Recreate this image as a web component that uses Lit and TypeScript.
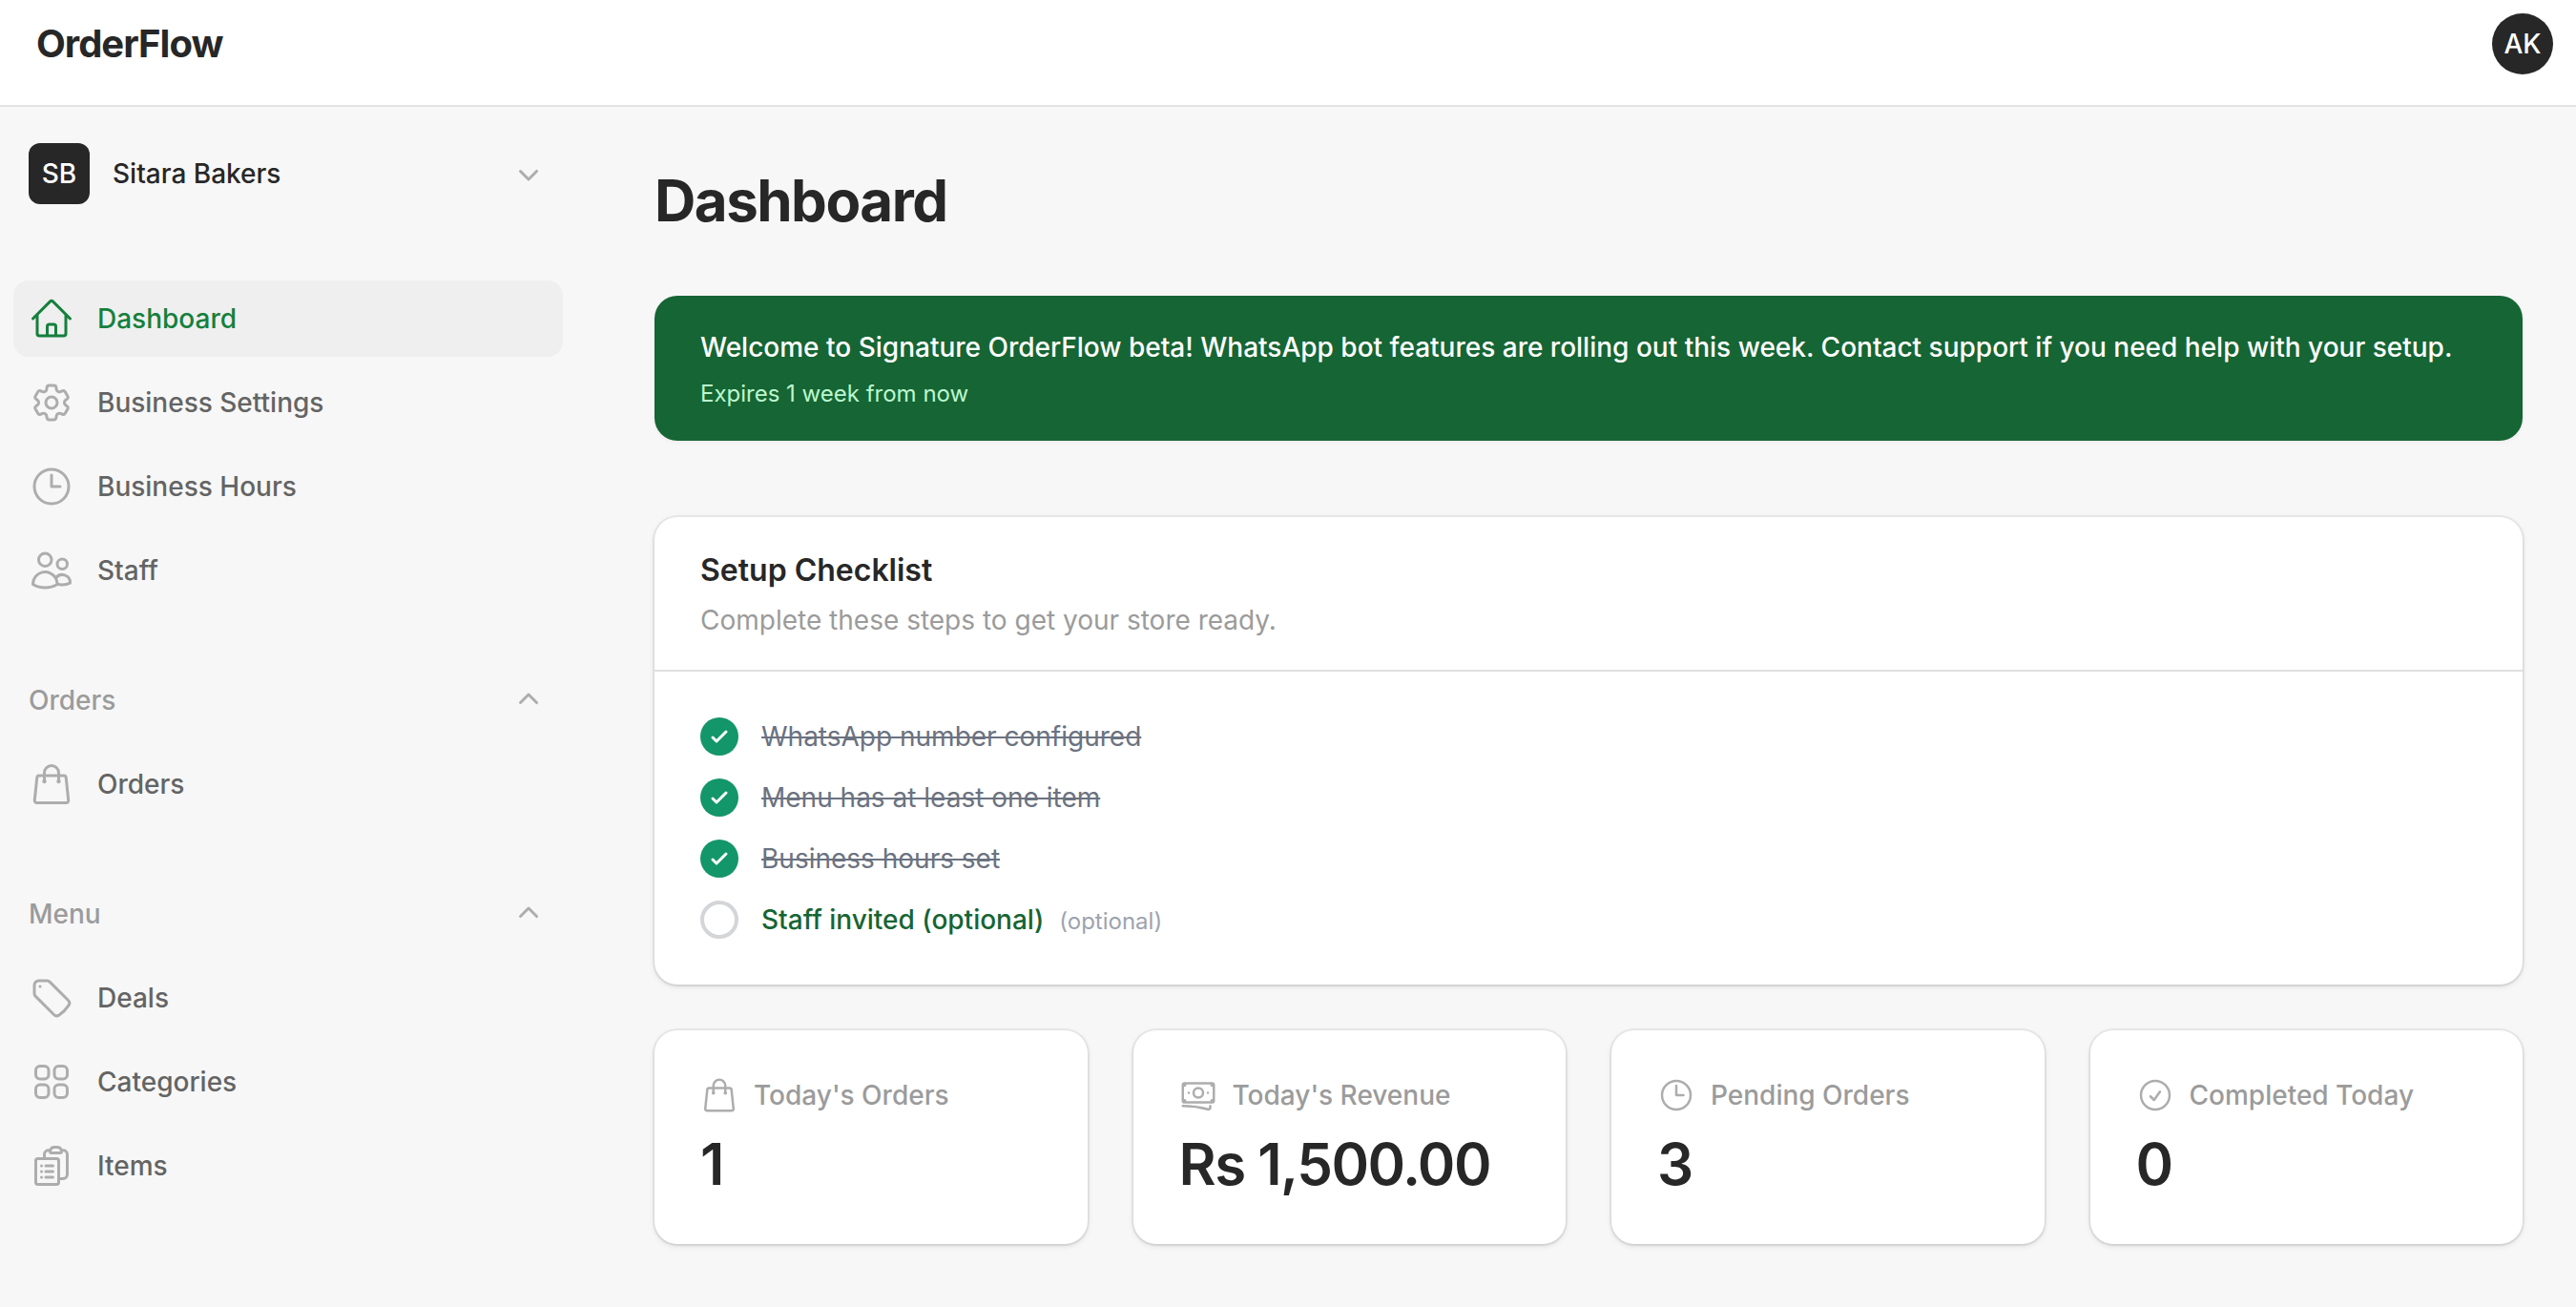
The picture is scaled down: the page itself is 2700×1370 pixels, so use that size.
import { LitElement, html, css } from "lit";
import { customElement, property } from "lit/decorators.js";
import { classMap } from "lit/directives/class-map.js";

// Outline icons on a 24x24 grid
const ICONS: Record<string, string> = {
  home: "m2.25 12 8.954-8.955c.44-.439 1.152-.439 1.591 0L21.75 12M4.5 9.75v10.125c0 .621.504 1.125 1.125 1.125H9.75v-4.875c0-.621.504-1.125 1.125-1.125h2.25c.621 0 1.125.504 1.125 1.125V21h4.125c.621 0 1.125-.504 1.125-1.125V9.75M8.25 21h8.25",
  cog: "M9.594 3.94c.09-.542.56-.94 1.11-.94h2.593c.55 0 1.02.398 1.11.94l.213 1.281c.063.374.313.686.645.87.074.04.147.083.22.127.325.196.72.257 1.075.124l1.217-.456a1.125 1.125 0 0 1 1.37.49l1.296 2.247a1.125 1.125 0 0 1-.26 1.431l-1.003.827c-.293.241-.438.613-.43.992a7.723 7.723 0 0 1 0 .255c-.008.378.137.75.43.991l1.004.827c.424.35.534.955.26 1.43l-1.298 2.247a1.125 1.125 0 0 1-1.369.491l-1.217-.456c-.355-.133-.75-.072-1.076.124a6.47 6.47 0 0 1-.22.128c-.331.183-.581.495-.644.869l-.213 1.281c-.09.543-.56.94-1.11.94h-2.594c-.55 0-1.019-.398-1.11-.94l-.213-1.281c-.062-.374-.312-.686-.644-.87a6.52 6.52 0 0 1-.22-.127c-.325-.196-.72-.257-1.076-.124l-1.217.456a1.125 1.125 0 0 1-1.369-.49l-1.297-2.247a1.125 1.125 0 0 1 .26-1.431l1.004-.827c.292-.24.437-.613.43-.991a6.932 6.932 0 0 1 0-.255c.007-.38-.138-.751-.43-.992l-1.004-.827a1.125 1.125 0 0 1-.26-1.43l1.297-2.247a1.125 1.125 0 0 1 1.37-.491l1.216.456c.356.133.751.072 1.076-.124.072-.044.146-.086.22-.128.332-.183.582-.495.644-.869l.214-1.28ZM15 12a3 3 0 1 1-6 0 3 3 0 0 1 6 0Z",
  clock: "M12 6v6h4.5m4.5 0a9 9 0 1 1-18 0 9 9 0 0 1 18 0Z",
  users: "M15 19.128a9.38 9.38 0 0 0 2.625.372 9.337 9.337 0 0 0 4.121-.952 4.125 4.125 0 0 0-7.533-2.493M15 19.128v-.003c0-1.113-.285-2.16-.786-3.07M15 19.128v.106A12.318 12.318 0 0 1 8.624 21c-2.331 0-4.512-.645-6.374-1.766l-.001-.109a6.375 6.375 0 0 1 11.964-3.07M12 6.375a3.375 3.375 0 1 1-6.75 0 3.375 3.375 0 0 1 6.75 0Zm8.25 2.25a2.625 2.625 0 1 1-5.25 0 2.625 2.625 0 0 1 5.25 0Z",
  bag: "M15.75 10.5V6a3.75 3.75 0 1 0-7.5 0v4.5m11.356-1.993 1.263 12c.07.665-.45 1.243-1.119 1.243H4.25a1.125 1.125 0 0 1-1.12-1.243l1.264-12A1.125 1.125 0 0 1 5.513 7.5h12.974c.576 0 1.059.435 1.119 1.007ZM8.625 10.5a.375.375 0 1 1-.75 0 .375.375 0 0 1 .75 0Zm7.5 0a.375.375 0 1 1-.75 0 .375.375 0 0 1 .75 0Z",
  tag: "M9.568 3H5.25A2.25 2.25 0 0 0 3 5.25v4.318c0 .597.237 1.17.659 1.591l9.581 9.581c.699.699 1.78.872 2.607.33a18.095 18.095 0 0 0 5.223-5.223c.542-.827.369-1.908-.33-2.607L11.16 3.66A2.25 2.25 0 0 0 9.568 3ZM6 6h.008v.008H6V6Z",
  squares: "M3.75 6A2.25 2.25 0 0 1 6 3.75h2.25A2.25 2.25 0 0 1 10.5 6v2.25a2.25 2.25 0 0 1-2.25 2.25H6a2.25 2.25 0 0 1-2.25-2.25V6ZM3.75 15.75A2.25 2.25 0 0 1 6 13.5h2.25a2.25 2.25 0 0 1 2.25 2.25V18a2.25 2.25 0 0 1-2.25 2.25H6A2.25 2.25 0 0 1 3.75 18v-2.25ZM13.5 6a2.25 2.25 0 0 1 2.25-2.25H18A2.25 2.25 0 0 1 20.25 6v2.25A2.25 2.25 0 0 1 18 10.5h-2.25a2.25 2.25 0 0 1-2.25-2.25V6ZM13.5 15.75a2.25 2.25 0 0 1 2.25-2.25H18a2.25 2.25 0 0 1 2.25 2.25V18A2.25 2.25 0 0 1 18 20.25h-2.25A2.25 2.25 0 0 1 13.5 18v-2.25Z",
  clipboard: "M9 12h3.75M9 15h3.75M9 18h3.75m3 .75H18a2.25 2.25 0 0 0 2.25-2.25V6.108c0-1.135-.845-2.098-1.976-2.192a48.424 48.424 0 0 0-1.123-.08m-5.801 0c-.065.21-.1.433-.1.664 0 .414.336.75.75.75h4.5a.75.75 0 0 0 .75-.75 2.25 2.25 0 0 0-.1-.664m-5.8 0A2.251 2.251 0 0 1 13.5 2.25H15c1.012 0 1.867.668 2.15 1.586m-5.8 0c-.376.023-.75.05-1.124.08C9.095 4.01 8.25 4.973 8.25 6.108V8.25m0 0H4.875c-.621 0-1.125.504-1.125 1.125v11.25c0 .621.504 1.125 1.125 1.125h9.75c.621 0 1.125-.504 1.125-1.125V9.375c0-.621-.504-1.125-1.125-1.125H8.25ZM6.75 12h.008v.008H6.75V12Zm0 3h.008v.008H6.75V15Zm0 3h.008v.008H6.75V18Z",
  banknotes: "M2.25 18.75a60.07 60.07 0 0 1 15.797 2.101c.727.198 1.453-.342 1.453-1.096V18.75M3.75 4.5v.75A.75.75 0 0 1 3 6h-.75m0 0v-.375c0-.621.504-1.125 1.125-1.125H20.25M2.25 6v9m18-10.5v.75c0 .414.336.75.75.75h.75m-1.5-1.5h.375c.621 0 1.125.504 1.125 1.125v9.75c0 .621-.504 1.125-1.125 1.125h-.375m1.5-1.5H21a.75.75 0 0 0-.75.75v.75m0 0H3.75m0 0h-.375a1.125 1.125 0 0 1-1.125-1.125V15m1.5 1.5v-.75A.75.75 0 0 0 3 15h-.75M15 10.5a3 3 0 1 1-6 0 3 3 0 0 1 6 0Zm3 0h.008v.008H18V10.5Zm-12 0h.008v.008H6V10.5Z",
  "check-circle": "M9 12.75 11.25 15 15 9.75M21 12a9 9 0 1 1-18 0 9 9 0 0 1 18 0Z",
  check: "M5 13l4 4L19 7",
};

// Solid icons on a 20x20 grid
const MINI_ICONS: Record<string, string> = {
  "chevron-down": "M5.22 8.22a.75.75 0 0 1 1.06 0L10 11.94l3.72-3.72a.75.75 0 1 1 1.06 1.06l-4.25 4.25a.75.75 0 0 1-1.06 0L5.22 9.28a.75.75 0 0 1 0-1.06Z",
  "chevron-up": "M9.47 6.47a.75.75 0 0 1 1.06 0l4.25 4.25a.75.75 0 1 1-1.06 1.06L10 8.06l-3.72 3.72a.75.75 0 0 1-1.06-1.06l4.25-4.25Z",
};

const NAV = [
  {
    label: "",
    items: [
      { icon: "home", label: "Dashboard", active: true },
      { icon: "cog", label: "Business Settings" },
      { icon: "clock", label: "Business Hours" },
      { icon: "users", label: "Staff" },
    ],
  },
  { label: "Orders", items: [{ icon: "bag", label: "Orders" }] },
  {
    label: "Menu",
    items: [
      { icon: "tag", label: "Deals" },
      { icon: "squares", label: "Categories" },
      { icon: "clipboard", label: "Items" },
    ],
  },
];

const STEPS = [
  { label: "WhatsApp number configured", done: true },
  { label: "Menu has at least one item", done: true },
  { label: "Business hours set", done: true },
  { label: "Staff invited (optional)", done: false, optional: true },
];

const STATS = [
  { icon: "bag", label: "Today's Orders", value: "1" },
  { icon: "banknotes", label: "Today's Revenue", value: "Rs 1,500.00" },
  { icon: "clock", label: "Pending Orders", value: "3" },
  { icon: "check-circle", label: "Completed Today", value: "0" },
];

@customElement("app-icon")
export class AppIcon extends LitElement {
  @property() name = "";

  static styles = css`
    :host {
      display: block;
      flex-shrink: 0;
      width: 40px;
      height: 40px;
    }

    svg {
      display: block;
      width: 100%;
      height: 100%;
    }
  `;

  render() {
    if (MINI_ICONS[this.name]) {
      return html`<svg viewBox="0 0 20 20" fill="currentColor">
        <path fill-rule="evenodd" clip-rule="evenodd" d=${MINI_ICONS[this.name]} />
      </svg>`;
    }
    return html`<svg viewBox="0 0 24 24" fill="none" stroke="currentColor" stroke-width=${this.name === "check" ? 3 : 1.5}>
      <path stroke-linecap="round" stroke-linejoin="round" d=${ICONS[this.name]} />
    </svg>`;
  }
}

@customElement("app-sidebar")
export class AppSidebar extends LitElement {
  static styles = css`
    :host {
      display: flex;
      flex-direction: column;
      box-sizing: border-box;
      width: 604px;
      flex-shrink: 0;
      padding: 38px 14px 0;
      font-weight: 500;
      line-height: 40px;
    }

    .tenant {
      display: flex;
      align-items: center;
      gap: 24px;
      padding: 0 16px;
      margin-bottom: 80px;
      color: #272727;
    }

    .tenant-avatar {
      display: flex;
      align-items: center;
      justify-content: center;
      width: 64px;
      height: 64px;
      border-radius: 12px;
      background: #272727;
      color: #fff;
    }

    .tenant-name {
      flex: 1;
    }

    .chevron {
      color: #adadad;
    }

    nav {
      display: flex;
      flex-direction: column;
      gap: 56px;
    }

    .group {
      display: flex;
      flex-direction: column;
      gap: 8px;
    }

    .group-header {
      display: flex;
      align-items: center;
      justify-content: space-between;
      height: 80px;
      padding: 0 16px;
      color: #9b9b9b;
    }

    .item {
      display: flex;
      align-items: center;
      gap: 24px;
      height: 80px;
      box-sizing: border-box;
      padding: 0 16px;
      border-radius: 16px;
      color: #646464;
    }

    .item app-icon {
      width: 48px;
      height: 48px;
      color: #adadad;
    }

    .item.active {
      background: #efefef;
    }

    .item.active,
    .item.active app-icon {
      color: #15803d;
    }
  `;

  render() {
    return html`
      <div class="tenant">
        <div class="tenant-avatar">SB</div>
        <span class="tenant-name">Sitara Bakers</span>
        <app-icon class="chevron" name="chevron-down"></app-icon>
      </div>
      <nav>
        ${NAV.map(
          (group) => html`
            <div class="group">
              ${group.label
                ? html`<div class="group-header">
                    <span>${group.label}</span>
                    <app-icon class="chevron" name="chevron-up"></app-icon>
                  </div>`
                : ""}
              ${group.items.map(
                (item: any) => html`
                  <div class=${classMap({ item: true, active: !!item.active })}>
                    <app-icon name=${item.icon}></app-icon>
                    <span>${item.label}</span>
                  </div>
                `
              )}
            </div>
          `
        )}
      </nav>
    `;
  }
}

@customElement("setup-checklist")
export class SetupChecklist extends LitElement {
  static styles = css`
    :host {
      display: block;
      border-radius: 24px;
      background: #fff;
      box-shadow: 0 0 0 2px rgba(0, 0, 0, 0.05), 0 2px 6px rgba(0, 0, 0, 0.1), 0 2px 4px -2px rgba(0, 0, 0, 0.1);
    }

    header {
      display: flex;
      flex-direction: column;
      gap: 8px;
      padding: 32px 48px;
      border-bottom: 2px solid #dfdfdf;
    }

    h3 {
      margin: 0;
      font-size: 32px;
      font-weight: 600;
      line-height: 48px;
      color: #272727;
    }

    .description {
      margin: 0;
      line-height: 40px;
      color: #9b9b9b;
    }

    ul {
      display: flex;
      flex-direction: column;
      gap: 24px;
      margin: 0;
      padding: 48px;
      list-style: none;
    }

    li {
      display: flex;
      align-items: center;
      gap: 24px;
      height: 40px;
      line-height: 40px;
    }

    .mark {
      display: flex;
      align-items: center;
      justify-content: center;
      box-sizing: border-box;
      width: 40px;
      height: 40px;
      border: 4px solid #d3d5d8;
      border-radius: 50%;
      color: #fff;
    }

    .done .mark {
      border: 0;
      background: #139669;
    }

    .mark app-icon {
      width: 24px;
      height: 24px;
    }

    .done .label {
      color: #6b7280;
      text-decoration: line-through;
    }

    .pending .label {
      font-weight: 500;
      color: #166534;
    }

    .hint {
      margin-left: 8px;
      font-size: 24px;
      line-height: 1;
      color: #9ca3af;
    }
  `;

  render() {
    return html`
      <header>
        <h3>Setup Checklist</h3>
        <p class="description">Complete these steps to get your store ready.</p>
      </header>
      <ul>
        ${STEPS.map(
          (step) => html`
            <li class=${step.done ? "done" : "pending"}>
              <span class="mark">${step.done ? html`<app-icon name="check"></app-icon>` : ""}</span>
              <div>
                <span class="label">${step.label}</span>
                ${step.optional ? html`<span class="hint">(optional)</span>` : ""}
              </div>
            </li>
          `
        )}
      </ul>
    `;
  }
}

@customElement("stat-card")
export class StatCard extends LitElement {
  @property() icon = "";
  @property() label = "";
  @property() value = "";

  static styles = css`
    :host {
      display: flex;
      flex-direction: column;
      gap: 16px;
      padding: 48px;
      border-radius: 24px;
      background: #fff;
      box-shadow: 0 0 0 2px rgba(0, 0, 0, 0.05), 0 2px 6px rgba(0, 0, 0, 0.1), 0 2px 4px -2px rgba(0, 0, 0, 0.1);
    }

    .label {
      display: flex;
      align-items: center;
      gap: 16px;
      font-weight: 500;
      line-height: 40px;
      color: #9b9b9b;
    }

    .label app-icon {
      color: #adadad;
    }

    .value {
      font-size: 60px;
      font-weight: 600;
      line-height: 72px;
      letter-spacing: -0.025em;
      white-space: nowrap;
      color: #272727;
    }
  `;

  render() {
    return html`
      <div class="label">
        <app-icon name=${this.icon}></app-icon>
        <span>${this.label}</span>
      </div>
      <div class="value">${this.value}</div>
    `;
  }
}

@customElement("app-root")
export class AppRoot extends LitElement {
  static styles = css`
    :host {
      display: flex;
      flex-direction: column;
      height: 1370px;
      overflow: hidden;
      background: #f7f7f7;
      font-family: Inter, sans-serif;
      font-size: 28px;
      color: #272727;
    }

    .topbar {
      display: flex;
      align-items: center;
      justify-content: space-between;
      box-sizing: border-box;
      height: 112px;
      padding: 0 24px 18px 38px;
      border-bottom: 2px solid #e3e3e3;
      background: #fff;
    }

    .logo {
      font-size: 40px;
      font-weight: 700;
      line-height: 40px;
      letter-spacing: -0.025em;
    }

    .avatar {
      display: flex;
      align-items: center;
      justify-content: center;
      width: 64px;
      height: 64px;
      border-radius: 50%;
      background: #272727;
      color: #fff;
      font-weight: 500;
    }

    .layout {
      display: flex;
      flex: 1;
    }

    main {
      flex: 1;
      display: flex;
      flex-direction: column;
      padding: 62px 56px 0 82px;
    }

    h1 {
      margin: 0 0 64px;
      font-size: 60px;
      font-weight: 700;
      line-height: 72px;
      letter-spacing: -0.025em;
    }

    .announcement {
      display: flex;
      flex-direction: column;
      gap: 13px;
      margin-bottom: 80px;
      padding: 34px 48px 33px;
      border-radius: 24px;
      background: #166534;
      color: #fff;
      box-shadow: 0 2px 4px rgba(0, 0, 0, 0.04);
    }

    .announcement p {
      margin: 0;
      font-weight: 500;
      line-height: 40px;
      white-space: nowrap;
    }

    .announcement small {
      font-size: 24px;
      line-height: 32px;
      color: #bbf7d0;
    }

    .stats {
      display: grid;
      grid-template-columns: repeat(4, minmax(0, 1fr));
      gap: 48px;
      margin-top: 48px;
    }
  `;

  render() {
    return html`
      <div class="topbar">
        <div class="logo">OrderFlow</div>
        <div class="avatar">AK</div>
      </div>
      <div class="layout">
        <app-sidebar></app-sidebar>
        <main>
          <h1>Dashboard</h1>
          <div class="announcement">
            <p>
              Welcome to Signature OrderFlow beta! WhatsApp bot features are rolling out this week. Contact support if
              you need help with your setup.
            </p>
            <small>Expires 1 week from now</small>
          </div>
          <setup-checklist></setup-checklist>
          <div class="stats">
            ${STATS.map(
              (stat) => html`<stat-card icon=${stat.icon} label=${stat.label} value=${stat.value}></stat-card>`
            )}
          </div>
        </main>
      </div>
    `;
  }
}
